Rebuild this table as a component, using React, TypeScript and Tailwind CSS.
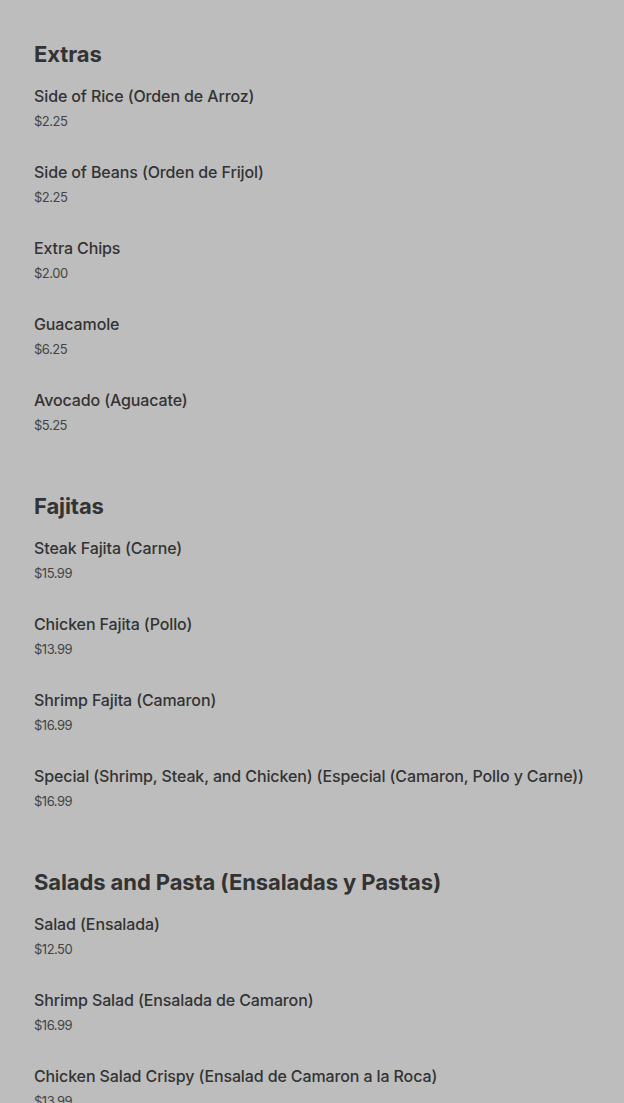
import React from 'react';

type Item = { name: string; price: string };

const sections: { title: string; items: Item[] }[] = [
  {
    title: 'Extras',
    items: [
      { name: 'Side of Rice (Orden de Arroz)', price: '$2.25' },
      { name: 'Side of Beans (Orden de Frijol)', price: '$2.25' },
      { name: 'Extra Chips', price: '$2.00' },
      { name: 'Guacamole', price: '$6.25' },
      { name: 'Avocado (Aguacate)', price: '$5.25' },
    ],
  },
  {
    title: 'Fajitas',
    items: [
      { name: 'Steak Fajita (Carne)', price: '$15.99' },
      { name: 'Chicken Fajita (Pollo)', price: '$13.99' },
      { name: 'Shrimp Fajita (Camaron)', price: '$16.99' },
      {
        name: 'Special (Shrimp, Steak, and Chicken) (Especial (Camaron, Pollo y Carne))',
        price: '$16.99',
      },
    ],
  },
  {
    title: 'Salads and Pasta (Ensaladas y Pastas)',
    items: [
      { name: 'Salad (Ensalada)', price: '$12.50' },
      { name: 'Shrimp Salad (Ensalada de Camaron)', price: '$16.99' },
      { name: 'Chicken Salad Crispy (Ensalad de Camaron a la Roca)', price: '$13.99' },
    ],
  },
];

const MenuItem = ({ item }: { item: Item }) => (
  <div className="flex flex-col pb-[29px]">
    <span className="whitespace-nowrap text-[16px] leading-6 font-medium tracking-[-0.12px] text-[#333333]">
      {item.name}
    </span>
    <span className="mt-[3px] text-[13px] leading-5 tracking-[-0.5px] text-[#444444]">{item.price}</span>
  </div>
);

const App = () => {
  return (
    <div
      className="min-h-screen h-[1103px] overflow-hidden bg-[#bdbdbd] px-[34px] pt-10"
      style={{ fontFamily: 'Inter, "Noto Sans", sans-serif' }}
    >
      {sections.map((s) => (
        <section key={s.title} className="pb-7">
          <h2 className="mb-4 text-[22px] leading-7 font-bold tracking-[-0.1px] text-[#333333]">
            {s.title}
          </h2>
          {s.items.map((it) => (
            <MenuItem key={it.name} item={it} />
          ))}
        </section>
      ))}
    </div>
  );
};

export default App;
